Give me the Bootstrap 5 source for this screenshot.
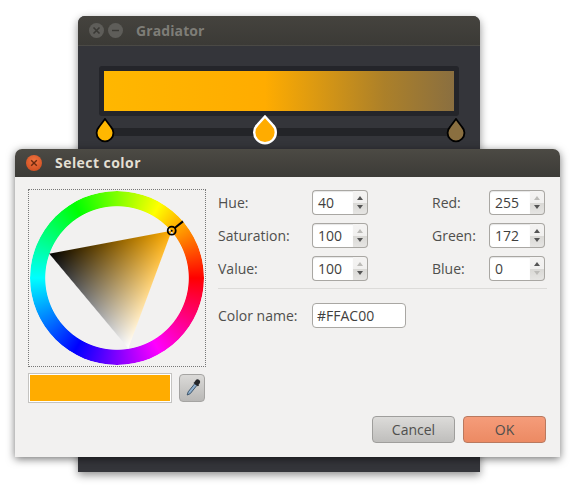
<!DOCTYPE html>
<html lang="en">
<head>
<meta charset="utf-8">
<title>Gradiator</title>
<link rel="stylesheet" href="https://cdn.jsdelivr.net/npm/bootstrap@5.3.0/dist/css/bootstrap.min.css">
<style>
html,body{background:#fff;margin:0;height:100%;overflow:hidden}
body{font-family:"Open Sans","Liberation Sans",sans-serif;font-size:14px;color:#4f4f4d}
.desk{position:relative;width:578px;height:496px}
.win-back{position:absolute;left:78px;top:16px;width:402px;height:456px;background:#34353a;border-radius:7px 7px 0 0;box-shadow:0 3px 8px rgba(0,0,0,.45)}
.back-title{height:30px;background:linear-gradient(#45433e,#3b3a36);border-bottom:1px solid #4a4945;border-radius:7px 7px 0 0;padding-left:11px;gap:4px}
.back-title .ttl{font-weight:700;font-size:14px;color:#7e7d77;margin-left:9px;letter-spacing:.1px}
.cap{width:15px;height:15px;border-radius:50%;background:#5e5d59}
.bar-frame{margin:20px 21px 0;height:50px;padding:5px;background:#24252a;border-radius:3px}
.bar-fill{height:100%;background:linear-gradient(90deg,#ffb700 0,#ffac00 46%,#ac8029 80%,#8a6f40 100%)}
.track-wrap{position:relative;margin:12px 21px 0;height:8px;background:#232428;border-radius:2px}
.stop{position:absolute}
.stop-a{left:-4px;top:-10px}
.stop-b{left:153px;top:-13px}
.stop-c{left:347px;top:-10px}
.win-dlg{position:absolute;left:15px;top:149px;width:545px;height:308px;background:#f2f1f0;border-radius:7px 7px 0 0;box-shadow:0 2px 8px rgba(0,0,0,.55)}
.dlg-title{height:28px;background:linear-gradient(#4c4a44,#3c3b37);border-radius:7px 7px 0 0;padding:0 0 1px 11px}
.dlg-title .ttl{font-weight:700;font-size:14px;color:#e3dfd3;margin-left:13px;letter-spacing:.45px}
.cap-close{width:16px;height:16px;border-radius:50%;background:radial-gradient(circle at 50% 35%,#f0733f,#c9481c)}
.dlg-body{position:relative;padding:12px 14px 14px 13px;height:280px}
.left-col{width:178px;margin-right:12px;flex:none}
.wheel-box{position:relative;width:178px;height:178px;border:1px dotted #777;padding:1px}
.hue-ring{width:174px;height:174px;border-radius:50%;background:conic-gradient(from 90deg,#f00,#f0f,#00f,#0ff,#0f0,#ff0,#f00);-webkit-mask:radial-gradient(closest-side,transparent 82%,#000 83%);mask:radial-gradient(closest-side,transparent 82%,#000 83%)}
.wheel-layer{position:absolute;left:0;top:0}
.swatch-row{margin-top:6px;gap:7px}
.swatch{width:144px;height:30px;border:1px solid #c4c3c1;background:#ffac00;box-shadow:inset 0 0 0 1px #fff}
.dropper.btn{width:26px;height:28px;padding:0;border:1px solid #a5a4a2;border-radius:4px;background:linear-gradient(#dbdad8,#b9b8b6)}
.fields{display:grid;grid-template-columns:94px 57px 63px 57px 57px;grid-auto-rows:25px;row-gap:8px;align-items:center;margin-top:1px}
.spinner{flex-wrap:nowrap;width:57px;height:25px}
.entry.form-control{flex:none;width:41px;height:25px;padding:0 5px;font-size:14px;line-height:23px;color:#3f3f3e;border:1px solid #a9a7a3;border-right:0;border-radius:4px 0 0 4px;background:#fff;box-shadow:inset 0 1px 1px rgba(0,0,0,.1)}
.updown{width:16px;height:25px;border:1px solid #a9a7a3;border-left:1px solid #c9c8c5;border-radius:0 4px 4px 0;background:linear-gradient(#f4f3f2 0,#f1f0ef 50%,#d9d8d5 51%,#e6e5e3 100%);align-items:center;justify-content:space-evenly}
.tri{width:0;height:0;border-left:3.5px solid transparent;border-right:3.5px solid transparent}
.tri.up{border-bottom:4px solid #555}
.tri.dn{border-top:4px solid #555}
.tri.up.off{border-bottom-color:#bcbbb8}
.tri.dn.off{border-top-color:#bcbbb8}
.sep{border-top:1px solid #dcdbd9;margin:7px 0 14px;width:329px}
.name-lbl{width:94px}
.name-entry.form-control{width:94px;height:25px;padding:0 4px;font-size:14px;line-height:23px;color:#3f3f3e;border:1px solid #a9a7a3;border-radius:4px;background:#fff}
.dlg-foot{gap:8px;position:absolute;right:14px;bottom:14px}
.act.btn{width:83px;height:27px;padding:0;font-size:14px;line-height:25px;color:#4f4f4d;border-radius:4px}
.act-cancel.btn{background:linear-gradient(#dcdbd9,#bfbebc);border:1px solid #9f9e9c}
.act-ok.btn{background:linear-gradient(#f59c7a,#ec8a63);border:1px solid #b9795f}
</style>
</head>
<body>
<div class="desk">

  <div class="win-back">
    <div class="back-title d-flex align-items-center">
      <span class="cap d-flex align-items-center justify-content-center">
        <svg width="9" height="9" viewBox="0 0 9 9"><path d="M1.5 1.5l6 6M7.5 1.5l-6 6" stroke="#3a3935" stroke-width="1.6"/></svg>
      </span>
      <span class="cap d-flex align-items-center justify-content-center">
        <svg width="9" height="9" viewBox="0 0 9 9"><path d="M1 4.5h7" stroke="#3a3935" stroke-width="1.4"/></svg>
      </span>
      <span class="ttl">Gradiator</span>
    </div>
    <div class="bar-frame"><div class="bar-fill"></div></div>
    <div class="track-wrap">
      <svg class="stop stop-a" width="20" height="25" viewBox="-1 0 20 25"><path d="M9 1L15 9A8.4 8.4 0 1 1 3 9Z" fill="#ffb700" stroke="#000" stroke-width="1.8"/></svg>
      <svg class="stop stop-b" width="26" height="31" viewBox="0 0 26 31"><path d="M13 1.5L20.4 9.6A10.8 10.8 0 1 1 5.6 9.6Z" fill="#ffac00" stroke="#fff" stroke-width="2.4"/></svg>
      <svg class="stop stop-c" width="20" height="25" viewBox="-1 0 20 25"><path d="M9 1L15 9A8.4 8.4 0 1 1 3 9Z" fill="#8a6f40" stroke="#000" stroke-width="1.8"/></svg>
    </div>
  </div>

  <div class="win-dlg">
    <div class="dlg-title d-flex align-items-center">
      <span class="cap-close d-flex align-items-center justify-content-center">
        <svg width="8" height="8" viewBox="0 0 8 8"><path d="M1.2 1.2l5.6 5.6M6.8 1.2l-5.6 5.6" stroke="#6a2a10" stroke-width="1.4"/></svg>
      </span>
      <span class="ttl">Select color</span>
    </div>
    <div class="dlg-body d-flex">
      <div class="left-col">
        <div class="wheel-box">
          <div class="hue-ring"></div>
          <canvas id="tri" class="wheel-layer" width="176" height="176"></canvas>
          <svg class="wheel-layer" width="176" height="176" viewBox="29 190 176 176">
            <circle cx="171.7" cy="230.7" r="4" fill="none" stroke="#000" stroke-width="1.8"/>
            <circle cx="171.7" cy="230.7" r="1" fill="#000"/>
            <path d="M175 227.8L183 221.4" stroke="#000" stroke-width="2"/>
          </svg>
        </div>
        <div class="swatch-row d-flex align-items-center">
          <div class="swatch"></div>
          <button type="button" class="dropper btn d-flex align-items-center justify-content-center" aria-label="Pick a color">
            <svg width="18" height="20" viewBox="-2 1 18 20">
              <path d="M9.8 6.6L3.2 14.8 2.2 18l3-1.3 6.6-8.2z" fill="#8fb0cf" stroke="#3f566c" stroke-width="1"/>
              <path d="M9.3 5.2l.9-1.1a2.6 2.6 0 0 1 3.2-1.6c1.8.7 2.3 2.6 1.2 3.9l-1 1.1 .4 1-1.2 .8-4.4-3.4z" fill="#24262a"/>
            </svg>
          </button>
        </div>
      </div>
      <div class="flex-grow-1">
        <div class="fields">
          <span>Hue:</span>
          <div class="spinner input-group"><span class="entry form-control">40</span><span class="updown d-flex flex-column"><i class="tri up"></i><i class="tri dn"></i></span></div>
          <span></span>
          <span>Red:</span>
          <div class="spinner input-group"><span class="entry form-control">255</span><span class="updown d-flex flex-column"><i class="tri up off"></i><i class="tri dn"></i></span></div>

          <span>Saturation:</span>
          <div class="spinner input-group"><span class="entry form-control">100</span><span class="updown d-flex flex-column"><i class="tri up off"></i><i class="tri dn"></i></span></div>
          <span></span>
          <span>Green:</span>
          <div class="spinner input-group"><span class="entry form-control">172</span><span class="updown d-flex flex-column"><i class="tri up"></i><i class="tri dn"></i></span></div>

          <span>Value:</span>
          <div class="spinner input-group"><span class="entry form-control">100</span><span class="updown d-flex flex-column"><i class="tri up off"></i><i class="tri dn"></i></span></div>
          <span></span>
          <span>Blue:</span>
          <div class="spinner input-group"><span class="entry form-control">0</span><span class="updown d-flex flex-column"><i class="tri up"></i><i class="tri dn off"></i></span></div>
        </div>
        <div class="sep"></div>
        <div class="d-flex align-items-center">
          <span class="name-lbl">Color name:</span>
          <span class="name-entry form-control">#FFAC00</span>
        </div>
      </div>
      <div class="dlg-foot d-flex">
        <button type="button" class="act act-cancel btn">Cancel</button>
        <button type="button" class="act act-ok btn">OK</button>
      </div>
    </div>
  </div>
</div>
<script src="https://cdn.jsdelivr.net/npm/bootstrap@5.3.0/dist/js/bootstrap.bundle.min.js"></script>
<script>
(function(){
  var c=document.getElementById('tri'),g=c.getContext('2d'),W=176,H=176,im=g.createImageData(W,H);
  var A=[142.7,40.7],B=[20.3,63.7],C=[99.3,158.3];
  var d=(B[1]-C[1])*(A[0]-C[0])+(C[0]-B[0])*(A[1]-C[1]),ad=Math.abs(d);
  var ab=Math.hypot(A[0]-B[0],A[1]-B[1]),bc=Math.hypot(B[0]-C[0],B[1]-C[1]),ca=Math.hypot(C[0]-A[0],C[1]-A[1]);
  for(var y=0;y<H;y++)for(var x=0;x<W;x++){
    var px=x+.5,py=y+.5;
    var a=((B[1]-C[1])*(px-C[0])+(C[0]-B[0])*(py-C[1]))/d;
    var b=((C[1]-A[1])*(px-C[0])+(A[0]-C[0])*(py-C[1]))/d;
    var w=1-a-b;
    var da=a*ad/bc,db=b*ad/ca,dc=w*ad/ab;
    var cov=Math.min(1,Math.max(0,Math.min(da,db,dc)+.5));
    if(cov<=0)continue;
    var aa=Math.max(0,a),ww=Math.max(0,w),i=(y*W+x)*4;
    im.data[i]=Math.min(255,255*aa+255*ww);
    im.data[i+1]=Math.min(255,172*aa+255*ww);
    im.data[i+2]=Math.min(255,255*ww);
    im.data[i+3]=cov*255;
  }
  g.putImageData(im,0,0);
})();
</script>
</body>
</html>
